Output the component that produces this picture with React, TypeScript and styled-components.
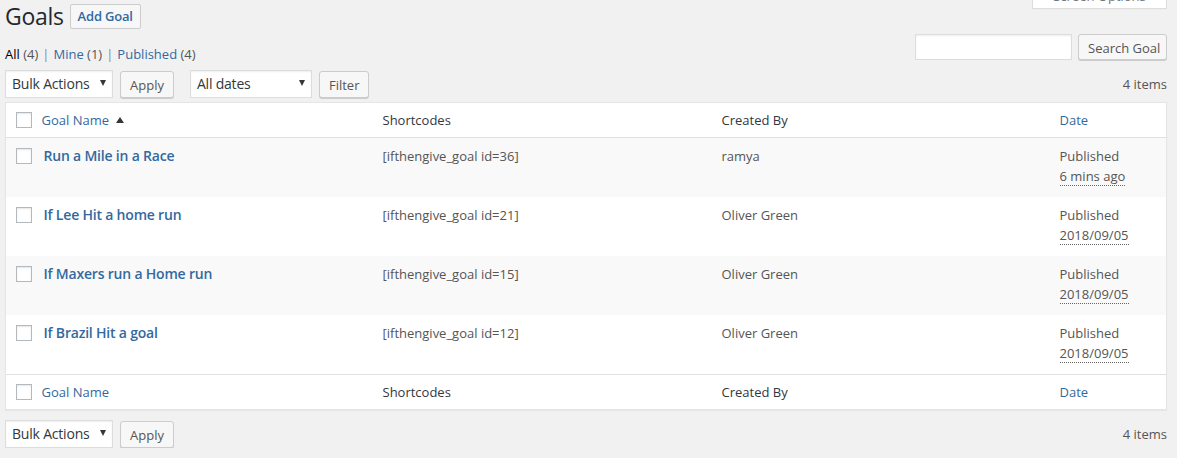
import styled, { createGlobalStyle } from 'styled-components';

const GlobalStyle = createGlobalStyle`
  body {
    margin: 0;
    background: #f1f1f1;
    color: #444;
    font-family: 'Open Sans', 'Noto Sans', sans-serif;
    font-size: 13px;
    line-height: 1.4em;
  }
  * {
    box-sizing: border-box;
  }
`;

const link = '#33699f';

const Page = styled.div`
  position: relative;
  padding: 4px 10px 0 5px;
`;

const ScreenOptions = styled.div`
  position: absolute;
  top: -14px;
  right: 10px;
  width: 135px;
  height: 23px;
  background: #fff;
  border: 1px solid #ddd;
  border-top: none;
  box-shadow: 0 1px 1px -1px rgba(0, 0, 0, 0.1);
  color: #72777c;
  font-size: 13px;
  line-height: 20px;
  text-align: center;
  overflow: hidden;
`;

const TitleRow = styled.div`
  display: flex;
  align-items: center;
  gap: 6px;
  height: 25px;
`;

const Title = styled.h1`
  margin: 0;
  font-size: 23px;
  font-weight: 400;
  line-height: 29px;
  letter-spacing: -0.3px;
  color: #23282d;
`;

const AddButton = styled.a`
  display: inline-flex;
  align-items: center;
  height: 25px;
  padding: 0 7px;
  border: 1px solid #ccc;
  border-radius: 2px;
  background: #f7f7f7;
  color: ${link};
  font-size: 13px;
  font-weight: 600;
  letter-spacing: -0.2px;
`;

const FilterRow = styled.div`
  display: flex;
  justify-content: space-between;
  align-items: flex-end;
  margin-top: 5px;
`;

const Views = styled.ul`
  display: flex;
  margin: 0 0 -4px;
  padding: 0;
  list-style: none;
  color: #666;
  font-size: 13px;
  line-height: 20px;
`;

const View = styled.li`
  span.sep {
    color: #888;
    margin: 0 4px 0 4px;
  }
`;

const ViewLink = styled.a<{ $current?: boolean }>`
  color: ${(p) => (p.$current ? '#000' : link)};
  text-decoration: none;
`;

const Count = styled.span`
  color: #555;
`;

const SearchBox = styled.div`
  display: flex;
  gap: 6px;
`;

const SearchInput = styled.div`
  width: 157px;
  height: 26px;
  background: #fff;
  border: 1px solid #ddd;
  box-shadow: inset 0 1px 2px rgba(0, 0, 0, 0.07);
`;

const Button = styled.button<{ $width?: number }>`
  height: ${(p) => (p.$width === 89 ? 26 : 27)}px;
  width: ${(p) => (p.$width ? `${p.$width}px` : 'auto')};
  padding: 0 9px 1px;
  border: 1px solid #ccc;
  border-radius: 3px;
  background: #f7f7f7;
  box-shadow: 0 1px 0 #ccc;
  color: #555;
  font-family: inherit;
  font-size: 13px;
  line-height: 26px;
  white-space: nowrap;
`;

const TableNav = styled.div<{ $bottom?: boolean }>`
  display: flex;
  align-items: center;
  gap: 7px;
  height: 28px;
  margin: ${(p) => (p.$bottom ? '10px 0 0' : '10px 0 4px')};
`;

const Group = styled.div`
  display: flex;
  align-items: center;
  gap: 7px;
  & + & {
    margin-left: 9px;
  }
`;

const Select = styled.div<{ $width: number }>`
  display: flex;
  justify-content: space-between;
  align-items: center;
  width: ${(p) => p.$width}px;
  height: 28px;
  padding: 0 6px 0 6px;
  background: #fff;
  border: 1px solid #ddd;
  box-shadow: inset 0 1px 2px rgba(0, 0, 0, 0.07);
  color: #32373c;
  font-size: 14px;
  letter-spacing: -0.2px;
`;

const Arrow = styled.span`
  width: 0;
  height: 0;
  margin-top: -3px;
  border-left: 3.5px solid transparent;
  border-right: 3.5px solid transparent;
  border-top: 6px solid #32373c;
`;

const Items = styled.div`
  margin-left: auto;
  color: #555;
  font-size: 13px;
`;

const Table = styled.table`
  width: 100%;
  table-layout: fixed;
  border-collapse: collapse;
  background: #fff;
  border: 1px solid #e5e5e5;
  box-shadow: 0 1px 1px rgba(0, 0, 0, 0.04);
`;

const HeadCell = styled.th<{ $link?: boolean }>`
  height: 35px;
  padding: 1px 10px 0;
  text-align: left;
  font-weight: 400;
  font-size: 13px;
  color: ${(p) => (p.$link ? link : '#32373c')};
`;

const CheckCell = styled.td`
  padding: 0 0 0 10px;
  vertical-align: top;
`;

const Box = styled.span<{ $top: number }>`
  display: block;
  width: 16px;
  height: 16px;
  margin-top: ${(p) => p.$top}px;
  border: 1px solid #b4b9be;
  background: #fff;
  box-shadow: inset 0 1px 2px rgba(0, 0, 0, 0.1);
`;

const HeadRow = styled.tr<{ $foot?: boolean }>`
  border-${(p) => (p.$foot ? 'top' : 'bottom')}: 1px solid #e1e1e1;
`;

const Row = styled.tr<{ $alt: boolean }>`
  background: ${(p) => (p.$alt ? '#f9f9f9' : '#fff')};
  height: 59px;
`;

const Cell = styled.td<{ $title?: boolean }>`
  padding: 8px 10px 11px ${(p) => (p.$title ? 12 : 10)}px;
  vertical-align: top;
  color: #555;
  font-size: 13px;
  line-height: 20px;
`;

const RowTitle = styled.a`
  color: ${link};
  font-weight: 600;
  font-size: 14px;
  letter-spacing: -0.2px;
  text-decoration: none;
`;

const SortArrow = styled.span`
  display: inline-block;
  width: 0;
  height: 0;
  margin: 0 0 2px 7px;
  border-left: 4px solid transparent;
  border-right: 4px solid transparent;
  border-bottom: 6px solid #32373c;
`;

const Abbr = styled.abbr`
  text-decoration: none;
  border-bottom: 1px dotted #666;
`;

const goals = [
  { name: 'Run a Mile in a Race', id: 36, by: 'ramya', date: '6 mins ago' },
  { name: 'If Lee Hit a home run', id: 21, by: 'Oliver Green', date: '2018/09/05' },
  { name: 'If Maxers run a Home run', id: 15, by: 'Oliver Green', date: '2018/09/05' },
  { name: 'If Brazil Hit a goal', id: 12, by: 'Oliver Green', date: '2018/09/05' },
];

function Columns({ foot }: { foot?: boolean }) {
  return (
    <HeadRow $foot={foot}>
      <CheckCell as="th" style={{ verticalAlign: 'middle' }}>
        <Box $top={0} />
      </CheckCell>
      <HeadCell $link>
        Goal Name{!foot && <SortArrow />}
      </HeadCell>
      <HeadCell>Shortcodes</HeadCell>
      <HeadCell>Created By</HeadCell>
      <HeadCell $link>Date</HeadCell>
    </HeadRow>
  );
}

function BulkBar({ bottom }: { bottom?: boolean }) {
  return (
    <TableNav $bottom={bottom}>
      <Group>
        <Select $width={108}>
          Bulk Actions <Arrow />
        </Select>
        <Button>Apply</Button>
      </Group>
      {!bottom && (
        <Group>
          <Select $width={122}>
            All dates <Arrow />
          </Select>
          <Button>Filter</Button>
        </Group>
      )}
      <Items>4 items</Items>
    </TableNav>
  );
}

export default function App() {
  return (
    <Page>
      <GlobalStyle />
      <ScreenOptions>Screen Options</ScreenOptions>
      <TitleRow>
        <Title>Goals</Title>
        <AddButton>Add Goal</AddButton>
      </TitleRow>
      <FilterRow>
        <Views>
          <View>
            <ViewLink $current>All</ViewLink> <Count>(4)</Count>
            <span className="sep">|</span>
          </View>
          <View>
            <ViewLink>Mine</ViewLink> <Count>(1)</Count>
            <span className="sep">|</span>
          </View>
          <View>
            <ViewLink>Published</ViewLink> <Count>(4)</Count>
          </View>
        </Views>
        <SearchBox>
          <SearchInput />
          <Button $width={89}>Search Goal</Button>
        </SearchBox>
      </FilterRow>
      <BulkBar />
      <Table>
        <colgroup>
          <col style={{ width: 26 }} />
          <col style={{ width: 341 }} />
          <col style={{ width: 339 }} />
          <col style={{ width: 338 }} />
          <col />
        </colgroup>
        <thead>
          <Columns />
        </thead>
        <tbody>
          {goals.map((g, i) => (
            <Row key={g.id} $alt={i % 2 === 0}>
              <CheckCell>
                <Box $top={10} />
              </CheckCell>
              <Cell $title>
                <RowTitle>{g.name}</RowTitle>
              </Cell>
              <Cell>[ifthengive_goal id={g.id}]</Cell>
              <Cell>{g.by}</Cell>
              <Cell>
                Published
                <br />
                <Abbr>{g.date}</Abbr>
              </Cell>
            </Row>
          ))}
        </tbody>
        <tfoot>
          <Columns foot />
        </tfoot>
      </Table>
      <BulkBar bottom />
    </Page>
  );
}
